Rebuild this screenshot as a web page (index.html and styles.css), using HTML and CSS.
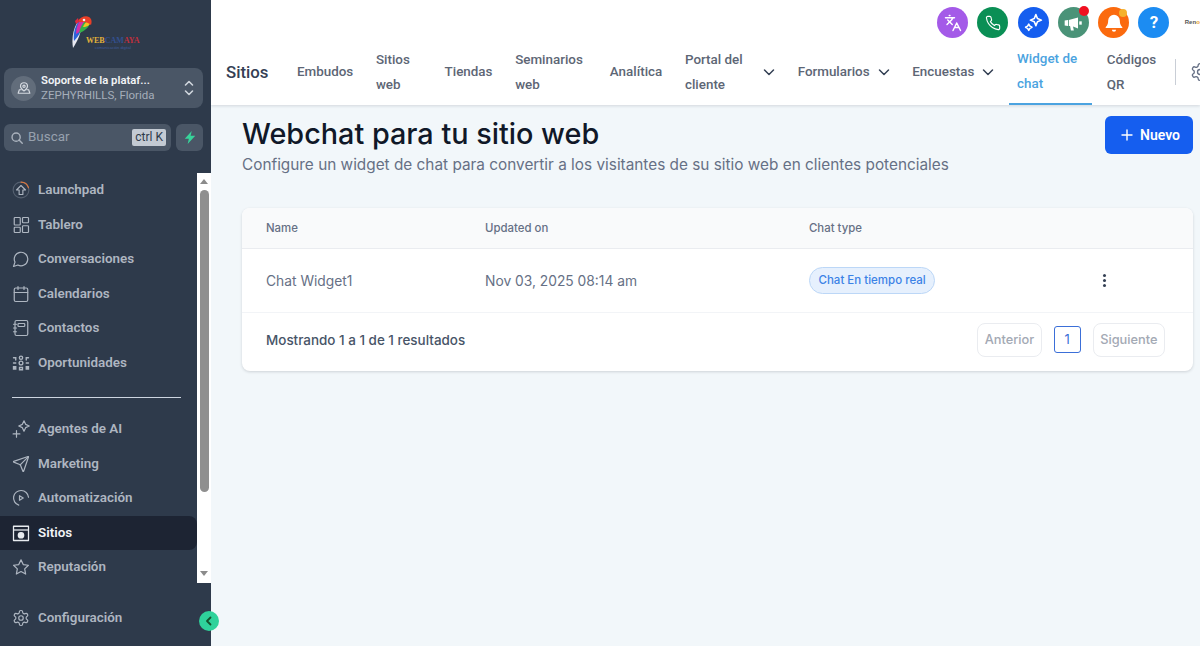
FILE: index.html
```html
<!DOCTYPE html>
<html lang="es">
<head>
<meta charset="utf-8">
<title>Webchat para tu sitio web</title>
<link rel="stylesheet" href="styles.css">
</head>
<body>
<div class="app">
  <aside class="sidebar">
    <div class="logo">
      <svg class="parrot" width="21" height="34" viewBox="0 0 21 34">
        <path d="M1 33C-.5 24 1 15 5 8c1-1 3 0 4 2 1 5-2 14-8 23z" fill="#e8eaf2"/>
        <path d="M2 26C1 19 3 12 6 7l4 2c0 6-3 12-8 17z" fill="#2d62d8"/>
        <path d="M4 19C4 13 6 8 9 4l4 3c0 5-3 9-9 12z" fill="#d42fa8"/>
        <path d="M7 18c1-5 3-9 6-12l5 2c-1 4-5 8-11 10z" fill="#35b04a"/>
        <path d="M11 12c1-3 3-5 5-6l3 1c-1 3-4 5-8 5z" fill="#f3c220"/>
        <path d="M6 6c2-4 8-6 11-4 3 2 3 5 2 8-2-2-5-3-8-3-2 0-4 0-5-1z" fill="#ea3f27"/>
        <path d="M6 3L3 6l1 3 3-2z" fill="#e0283f"/>
        <circle cx="12" cy="5" r="1.300" fill="#f2f4f7"/>
      </svg>
      <div class="logo-words">
        <div class="logo-name"><span class="ly">WEB</span><span class="lb">CAM</span><span class="lr">AYA</span></div>
        <div class="logo-sub">comunicación digital</div>
      </div>
    </div>

    <div class="account">
      <span class="account-avatar">
        <svg width="14" height="14" viewBox="0 0 24 24" fill="none" stroke="#d5dae1" stroke-width="2" stroke-linecap="round" stroke-linejoin="round"><path d="M18 9c0 4-6 8-6 8s-6-4-6-8a6 6 0 0 1 12 0z"/><circle cx="12" cy="9" r="2"/><path d="M7 15H4l-2 6h20l-2-6h-3"/></svg>
      </span>
      <div class="account-text">
        <div class="account-name">Soporte de la plataf...</div>
        <div class="account-place">ZEPHYRHILLS, Florida</div>
      </div>
      <svg class="account-toggle" width="12" height="20" viewBox="0 0 12 20" fill="none" stroke="#cfd5dc" stroke-width="1.600" stroke-linecap="round" stroke-linejoin="round"><path d="M2.500 7l3.500-3.500L9.500 7M2.500 13l3.500 3.500 3.500-3.500"/></svg>
    </div>

    <div class="search-row">
      <div class="search">
        <svg width="14" height="14" viewBox="0 0 24 24" fill="none" stroke="#aab2bd" stroke-width="2.400" stroke-linecap="round"><circle cx="10.500" cy="10.500" r="7"/><path d="M21 21l-5.500-5.500"/></svg>
        <span class="search-label">Buscar</span>
        <span class="kbd">ctrl K</span>
      </div>
      <button class="bolt" aria-label="Acciones rápidas">
        <svg width="14" height="15" viewBox="0 0 24 24"><path d="M15 1L3 14h7l-2 9 13-14h-8z" fill="#37d39a"/></svg>
      </button>
    </div>

    <div class="nav-wrap">
      <nav class="nav">
        <a class="nav-item"><svg class="ico" viewBox="0 0 24 24" fill="none" stroke-width="1.500" stroke-linecap="round" stroke-linejoin="round"><circle cx="12" cy="12" r="10.500" stroke="#556070"/><path d="M12 1.500a10.500 10.500 0 0 1 10 7.500" stroke="#d9773f"/><path d="M12 6l-6 6h3.500v6h5v-6H18z" stroke="#aeb6c1"/></svg><span>Launchpad</span></a>
        <a class="nav-item"><svg class="ico" viewBox="0 0 24 24" fill="none" stroke="#aeb6c1" stroke-width="1.600" stroke-linejoin="round"><rect x="3" y="2" width="8" height="10" rx="1"/><rect x="14" y="2" width="8" height="7" rx="1"/><rect x="14" y="13" width="8" height="9" rx="1"/><rect x="3" y="15" width="8" height="7" rx="1"/></svg><span>Tablero</span></a>
        <a class="nav-item"><svg class="ico" viewBox="0 0 24 24" fill="none" stroke="#aeb6c1" stroke-width="1.600" stroke-linecap="round" stroke-linejoin="round"><path d="M7.900 20A9 9 0 1 0 4 16.100L2 22Z"/></svg><span>Conversaciones</span></a>
        <a class="nav-item"><svg class="ico" viewBox="0 0 24 24" fill="none" stroke="#aeb6c1" stroke-width="1.600" stroke-linecap="round" stroke-linejoin="round"><rect x="3" y="4" width="18" height="18" rx="2"/><path d="M8 2v4M16 2v4M3 10h18"/></svg><span>Calendarios</span></a>
        <a class="nav-item"><svg class="ico" viewBox="0 0 24 24" fill="none" stroke="#aeb6c1" stroke-width="1.600" stroke-linecap="round" stroke-linejoin="round"><rect x="4" y="2" width="17" height="20" rx="2"/><rect x="8" y="6" width="9" height="4" rx="1"/><path d="M2 7h4M2 12h4M2 17h4"/></svg><span>Contactos</span></a>
        <a class="nav-item"><svg class="ico" viewBox="0 0 24 24" fill="none" stroke="#aeb6c1" stroke-width="1.800" stroke-linecap="round"><circle cx="12" cy="5" r="2.200"/><circle cx="12" cy="12" r="2.500"/><path d="M10 21v-3h4v3z"/><path d="M2 5h3v3M22 5h-3v3M2 12h3M19 12h3"/><path d="M2 17h3v3H2zM19 17h3v3h-3z" fill="#aeb6c1"/></svg><span>Oportunidades</span></a>

        <div class="nav-divider"></div>

        <a class="nav-item"><svg class="ico" viewBox="0 0 24 24" fill="none" stroke="#aeb6c1" stroke-width="1.600" stroke-linecap="round" stroke-linejoin="round"><path d="M16 1l2.200 4.800L23 8l-4.800 2.200L16 15l-2.200-4.800L9 8l4.800-2.200z"/><path d="M6 14v9M1.500 18.500h9"/></svg><span>Agentes de AI</span></a>
        <a class="nav-item"><svg class="ico" viewBox="0 0 24 24" fill="none" stroke="#aeb6c1" stroke-width="1.600" stroke-linecap="round" stroke-linejoin="round"><path d="M14.536 21.686a.5.5 0 0 0 .937-.024l6.500-19a.496.496 0 0 0-.635-.635l-19 6.500a.5.5 0 0 0-.024.937l7.930 3.180a2 2 0 0 1 1.112 1.110z"/><path d="m21.854 2.147-10.940 10.939"/></svg><span>Marketing</span></a>
        <a class="nav-item"><svg class="ico" viewBox="0 0 24 24" fill="none" stroke="#aeb6c1" stroke-width="1.600" stroke-linecap="round" stroke-linejoin="round"><path d="M22 11A10 10 0 1 0 9 21.500"/><path d="M10 9v6l5-3z"/></svg><span>Automatización</span></a>
        <a class="nav-item is-active"><svg class="ico" viewBox="0 0 24 24" fill="none" stroke="#e8ebef" stroke-width="1.700" stroke-linejoin="round"><rect x="2" y="3" width="20" height="19"/><path d="M2 8h20"/><circle cx="12" cy="15" r="3.600" fill="#e8ebef"/></svg><span>Sitios</span></a>
        <a class="nav-item"><svg class="ico" viewBox="0 0 24 24" fill="none" stroke="#aeb6c1" stroke-width="1.600" stroke-linejoin="round"><path d="M12 2.500l3 6.300 6.900.9-5 4.800 1.300 6.900-6.200-3.400-6.200 3.400 1.300-6.900-5-4.800 6.900-.9z"/></svg><span>Reputación</span></a>
      </nav>
      <div class="scrollbar">
        <span class="arrow-up"></span>
        <span class="thumb"></span>
        <span class="arrow-down"></span>
      </div>
    </div>

    <a class="nav-item settings"><svg class="ico" viewBox="0 0 24 24" fill="none" stroke="#aeb6c1" stroke-width="1.600" stroke-linecap="round" stroke-linejoin="round"><path d="M12.220 2h-.44a2 2 0 0 0-2 2v.18a2 2 0 0 1-1 1.730l-.43.25a2 2 0 0 1-2 0l-.15-.08a2 2 0 0 0-2.730.73l-.22.38a2 2 0 0 0 .73 2.730l.15.1a2 2 0 0 1 1 1.720v.51a2 2 0 0 1-1 1.740l-.15.09a2 2 0 0 0-.73 2.730l.22.38a2 2 0 0 0 2.730.73l.15-.08a2 2 0 0 1 2 0l.43.25a2 2 0 0 1 1 1.730V20a2 2 0 0 0 2 2h.44a2 2 0 0 0 2-2v-.18a2 2 0 0 1 1-1.730l.43-.25a2 2 0 0 1 2 0l.15.08a2 2 0 0 0 2.730-.73l.22-.39a2 2 0 0 0-.73-2.730l-.15-.08a2 2 0 0 1-1-1.740v-.5a2 2 0 0 1 1-1.740l.15-.09a2 2 0 0 0 .73-2.730l-.22-.38a2 2 0 0 0-2.730-.73l-.15.08a2 2 0 0 1-2 0l-.43-.25a2 2 0 0 1-1-1.730V4a2 2 0 0 0-2-2z"/><circle cx="12" cy="12" r="3"/></svg><span>Configuración</span></a>

    <button class="collapse" aria-label="Contraer">
      <svg width="10" height="10" viewBox="0 0 10 10" fill="none" stroke="#14532d" stroke-width="1.800" stroke-linecap="round" stroke-linejoin="round"><path d="M6.500 1.500L3 5l3.500 3.500"/></svg>
    </button>
  </aside>

  <main class="main">
    <header class="topbar">
      <div class="quick">
        <span class="qbtn q-purple"><svg width="18" height="18" viewBox="0 0 24 24" fill="none" stroke="#fff" stroke-width="1.900" stroke-linecap="round" stroke-linejoin="round"><path d="m5 8 6 6M4 14l6-6 2-3M2 5h12M7 2h1M22 22l-5-10-5 10M14 18h6"/></svg></span>
        <span class="qbtn q-green"><svg width="16" height="16" viewBox="0 0 24 24" fill="none" stroke="#fff" stroke-width="1.700" stroke-linecap="round" stroke-linejoin="round"><path d="M22 16.920v3a2 2 0 0 1-2.180 2 19.790 19.790 0 0 1-8.630-3.070 19.500 19.500 0 0 1-6-6 19.790 19.790 0 0 1-3.070-8.670A2 2 0 0 1 4.110 2h3a2 2 0 0 1 2 1.720 12.840 12.840 0 0 0 .7 2.810 2 2 0 0 1-.45 2.110L8.090 9.910a16 16 0 0 0 6 6l1.270-1.270a2 2 0 0 1 2.110-.45 12.840 12.840 0 0 0 2.810.7A2 2 0 0 1 22 16.920z"/></svg></span>
        <span class="qbtn q-blue"><svg width="19" height="19" viewBox="0 0 24 24" fill="none" stroke="#fff" stroke-width="2" stroke-linejoin="round"><path d="M15 2l2 5 5 2-5 2-2 5-2-5-5-2 5-2z"/><path d="M6 14l1.500 2.500L10 18l-2.500 1.500L6 22l-1.500-2.500L2 18l2.500-1.500z"/></svg></span>
        <span class="qbtn q-teal"><svg width="20" height="20" viewBox="0 0 24 24" fill="#fff"><path d="M2 9v6l4 .5V8.500z"/><path d="M7 8.500v7l1.500.2 1 5.300h3.500l-1-4.800 6 2.300V5.500z"/><rect x="19.500" y="10" width="3" height="4"/></svg><i class="dot dot-red"></i></span>
        <span class="qbtn q-orange"><svg width="20" height="20" viewBox="0 0 24 24" fill="#fff"><path d="M12 2a7 7 0 0 0-7 7c0 5-2 7-3 8v1h20v-1c-1-1-3-3-3-8a7 7 0 0 0-7-7z"/><path d="M9.500 20a2.500 2.500 0 0 0 5 0z"/></svg><i class="dot dot-amber"></i></span>
        <span class="qbtn q-sky">?</span>
        <span class="brand-mini"><b>Ren</b><i>o</i></span>
      </div>
      <div class="tabs-row">
        <div class="section-title">Sitios</div>
        <div class="tab">Embudos</div>
        <div class="tab w-sitios">Sitios web</div>
        <div class="tab">Tiendas</div>
        <div class="tab w-seminarios">Seminarios web</div>
        <div class="tab">Analítica</div>
        <div class="tab has-chev"><span class="w-portal">Portal del cliente</span><svg class="chev" width="12" height="12" viewBox="0 0 12 12" fill="none" stroke="#344054" stroke-width="1.500" stroke-linecap="round" stroke-linejoin="round"><path d="M1.500 4l4.500 4.500L10.500 4"/></svg></div>
        <div class="tab has-chev">Formularios<svg class="chev" width="12" height="12" viewBox="0 0 12 12" fill="none" stroke="#344054" stroke-width="1.500" stroke-linecap="round" stroke-linejoin="round"><path d="M1.500 4l4.500 4.500L10.500 4"/></svg></div>
        <div class="tab has-chev">Encuestas<svg class="chev" width="12" height="12" viewBox="0 0 12 12" fill="none" stroke="#344054" stroke-width="1.500" stroke-linecap="round" stroke-linejoin="round"><path d="M1.500 4l4.500 4.500L10.500 4"/></svg></div>
        <div class="tab is-current w-widget">Widget de chat</div>
        <div class="tab w-codigos">Códigos QR</div>
        <span class="tabs-sep"></span>
        <svg class="tabs-gear" width="20" height="20" viewBox="0 0 24 24" fill="none" stroke="#667085" stroke-width="1.600" stroke-linecap="round" stroke-linejoin="round"><path d="M12.220 2h-.44a2 2 0 0 0-2 2v.18a2 2 0 0 1-1 1.730l-.43.25a2 2 0 0 1-2 0l-.15-.08a2 2 0 0 0-2.730.73l-.22.38a2 2 0 0 0 .73 2.730l.15.1a2 2 0 0 1 1 1.720v.51a2 2 0 0 1-1 1.740l-.15.09a2 2 0 0 0-.73 2.730l.22.38a2 2 0 0 0 2.730.73l.15-.08a2 2 0 0 1 2 0l.43.25a2 2 0 0 1 1 1.730V20a2 2 0 0 0 2 2h.44a2 2 0 0 0 2-2v-.18a2 2 0 0 1 1-1.730l.43-.25a2 2 0 0 1 2 0l.15.08a2 2 0 0 0 2.730-.73l.22-.39a2 2 0 0 0-.73-2.730l-.15-.08a2 2 0 0 1-1-1.740v-.5a2 2 0 0 1 1-1.740l.15-.09a2 2 0 0 0 .73-2.730l-.22-.38a2 2 0 0 0-2.730-.73l-.15.08a2 2 0 0 1-2 0l-.43-.25a2 2 0 0 1-1-1.730V4a2 2 0 0 0-2-2z"/><circle cx="12" cy="12" r="3"/></svg>
      </div>
    </header>

    <section class="content">
      <div class="page-head">
        <div>
          <h1 class="page-title">Webchat para tu sitio web</h1>
          <p class="page-sub">Configure un widget de chat para convertir a los visitantes de su sitio web en clientes potenciales</p>
        </div>
        <button class="btn-new"><svg width="12" height="12" viewBox="0 0 12 12" fill="none" stroke="#fff" stroke-width="1.400" stroke-linecap="round"><path d="M6 1v10M1 6h10"/></svg>Nuevo</button>
      </div>

      <div class="card">
        <div class="grid-row head-row">
          <div>Name</div><div>Updated on</div><div>Chat type</div><div></div>
        </div>
        <div class="grid-row body-row">
          <div>Chat Widget1</div>
          <div>Nov 03, 2025 08:14 am</div>
          <div><span class="pill">Chat En tiempo real</span></div>
          <div class="more"><i></i><i></i><i></i></div>
        </div>
        <div class="card-foot">
          <div class="foot-text">Mostrando 1 a 1 de 1 resultados</div>
          <div class="pager">
            <span class="pg-btn">Anterior</span>
            <span class="pg-num">1</span>
            <span class="pg-btn">Siguiente</span>
          </div>
        </div>
      </div>
    </section>
  </main>
</div>
</body>
</html>
```
FILE: styles.css
```css
* { box-sizing: border-box; }
html, body { margin: 0; height: 100%; overflow: hidden; }
body { font-family: Inter, "Liberation Sans", sans-serif; color: #101828; background: #f2f7fa; }
.app { display: flex; width: 1200px; height: 646px; }

/* Sidebar */
.sidebar { position: relative; flex: 0 0 211px; height: 646px; background: #2e3a4b; display: flex; flex-direction: column; font-family: Roboto, "Liberation Sans", sans-serif; }
.logo { height: 68px; padding: 15px 0 0 72px; display: flex; align-items: flex-start; }
.parrot { flex: none; }
.logo-words { margin: 21px 0 0 -7px; }
.logo-name { font: 700 8px/9px "Liberation Serif", serif; white-space: nowrap; }
.ly { color: #e3b23a; }
.lb { color: #33508f; }
.lr { color: #bf2f3d; }
.logo-sub { font: 400 4px/5px "Liberation Sans", sans-serif; color: #3f5a9a; text-align: center; white-space: nowrap; }

.account { margin: 0 8px 0 4px; height: 40px; border-radius: 8px; background: #4a5666; display: flex; align-items: center; padding: 0 8px 0 7px; }
.account-avatar { width: 25px; height: 25px; border-radius: 50%; background: #626d7b; display: flex; align-items: center; justify-content: center; flex: none; }
.account-text { flex: 1; margin-left: 5px; min-width: 0; }
.account-name { font-size: 11.300px; line-height: 14px; font-weight: 600; color: #f2f4f7; white-space: nowrap; }
.account-place { font-size: 11.500px; line-height: 14px; color: #a5aeba; white-space: nowrap; }
.account-toggle { flex: none; }

.search-row { margin: 16px 8px 0 4px; display: flex; gap: 5px; height: 27px; }
.search { flex: 1; background: #4a5666; border-radius: 6px; display: flex; align-items: center; padding: 0 5px 0 6px; }
.search-label { margin-left: 4px; padding-bottom: 2px; font-size: 13.400px; color: #97a1ae; flex: 1; }
.kbd { background: #c3cad3; color: #2e3a4b; font-size: 12px; line-height: 17px; padding: 0 3px; border-radius: 2px; }
.bolt { width: 27px; height: 27px; border: 0; padding: 0; border-radius: 6px; background: #4a5666; display: flex; align-items: center; justify-content: center; }

.nav-wrap { margin-top: 22px; height: 410px; display: flex; }
.nav { flex: 0 0 197px; display: flex; flex-direction: column; }
.nav-item { display: flex; align-items: center; height: 34.500px; padding-left: 12px; color: #aeb6c1; font-size: 13.400px; font-weight: 600; flex: none; }
.nav-item span { padding-bottom: 1px; }
.ico { width: 18px; height: 18px; flex: none; margin-right: 8px; }
.is-active { background: #1d2433; color: #f2f4f7; border-radius: 0 8px 8px 0; }
.nav-divider { margin: 16.500px 16px 14.500px 12px; border-top: 1px solid #cdd5e0; flex: none; }
.settings { margin-top: 18px; }

.scrollbar { flex: 0 0 14px; background: #fff; display: flex; flex-direction: column; align-items: center; padding-top: 6px; }
.arrow-up { width: 0; height: 0; border: 4px solid transparent; border-top: 0; border-bottom: 5px solid #8b8b8b; }
.thumb { width: 9px; height: 302px; margin-top: 6px; background: #8f8f8f; border-radius: 5px; }
.arrow-down { width: 0; height: 0; margin-top: 79px; border: 4px solid transparent; border-bottom: 0; border-top: 5px solid #8b8b8b; }

.collapse { position: absolute; left: 199px; top: 611px; width: 20px; height: 20px; border: 0; padding: 0; border-radius: 50%; background: #2fd29b; display: flex; align-items: center; justify-content: center; z-index: 2; }

/* Main */
.main { flex: 1; min-width: 0; overflow: hidden; display: flex; flex-direction: column; }
.topbar { height: 105px; flex: none; background: #fff; box-shadow: 0 1px 3px rgba(16,24,40,.14); position: relative; z-index: 1; font-family: Roboto, "Liberation Sans", sans-serif; }
.quick { height: 47px; padding: 7px 0 0 726px; display: flex; gap: 9.300px; align-items: flex-start; white-space: nowrap; }
.qbtn { position: relative; flex: none; width: 31px; height: 31px; border-radius: 50%; display: flex; align-items: center; justify-content: center; color: #fff; font: 700 17px/1 Roboto, sans-serif; }
.q-purple { background: #a45ae8; }
.q-green { background: #0a8f55; }
.q-blue { background: #155eef; }
.q-teal { background: #4a9378; }
.q-orange { background: #fb6a0e; }
.q-sky { background: #1c8cf2; }
.dot { position: absolute; width: 10px; height: 10px; border-radius: 50%; top: -1px; right: 0; }
.dot-red { background: #f01020; }
.dot-amber { background: #f5b22b; width: 8px; height: 8px; top: 2px; right: 2px; }
.brand-mini { font: 700 6px/31px "Liberation Sans", sans-serif; color: #555; margin-left: 6px; }
.brand-mini i { color: #e79a1e; font-style: normal; font-weight: 700; }

.tabs-row { height: 58px; display: flex; align-items: center; gap: 6.700px; padding-left: 15px; white-space: nowrap; }
.section-title { font-size: 16.800px; font-weight: 500; color: #344054; width: 56.300px; flex: none; margin-bottom: 9px; }
.tab { flex: none; padding: 0 8px 9px; font-size: 13.400px; line-height: 25px; color: #5d6675; font-weight: 500; display: flex; align-items: center; height: 58px; }
.w-sitios { width: 62px; white-space: normal; }
.w-seminarios { width: 88px; white-space: normal; }
.w-portal { width: 72px; white-space: normal; flex: none; }
.w-widget { width: 83px; white-space: normal; }
.w-codigos { width: 66px; white-space: normal; }
.chev { margin-left: 8px; flex: none; }
.has-chev .w-portal + .chev { margin-left: 6px; }
.is-current { color: #4ba3e0; box-shadow: inset 0 -2px 0 #4ba3e0; padding-bottom: 11px; }
.tabs-sep { flex: none; width: 1px; height: 26px; margin: 0 0 8px 4px; background: #c9ced6; }
.tabs-gear { flex: none; margin: 0 0 8px 7px; }

.content { flex: 1; padding: 11px 7px 0 31px; background: #f2f7fa; }
.page-head { display: flex; justify-content: space-between; align-items: flex-start; height: 92px; }
.page-title { margin: 0; font-size: 28.800px; line-height: 36px; font-weight: 500; color: #101828; white-space: nowrap; }
.page-sub { margin: 2px 0 0; font-size: 15.350px; line-height: 22px; color: #667085; white-space: nowrap; }
.btn-new { width: 88px; height: 38px; border: 0; border-radius: 6px; background: #155eef; color: #fff; font: 600 14px/1 Roboto, sans-serif; display: flex; align-items: center; justify-content: center; gap: 7px; padding: 0 0 0 3px; }

.card { background: #fff; border-radius: 8px; box-shadow: 0 1px 3px rgba(16,24,40,.16); overflow: hidden; }
.grid-row { display: grid; grid-template-columns: 219px 324px 295px 1fr; padding-left: 24px; align-items: center; }
.head-row { height: 41px; padding-bottom: 1px; background: #f9fafb; font-size: 11.400px; font-weight: 500; color: #667085; border-bottom: 1px solid #eaecf0; }
.body-row { height: 64px; font-size: 13.800px; color: #667085; border-bottom: 1px solid #f2f4f7; }
.pill { display: inline-block; height: 27px; line-height: 25px; padding: 0 8.500px; font-size: 11.500px; font-weight: 500; color: #3b82e6; background: #e6f0fd; border: 1px solid #bcd7f7; border-radius: 14px; }
.more { display: flex; flex-direction: column; align-items: flex-start; gap: 2px; margin-left: -1px; }
.more i { width: 3px; height: 3px; border-radius: 50%; background: #344054; }
.card-foot { height: 58px; padding: 0 28px 5px 24px; display: flex; justify-content: space-between; align-items: center; }
.foot-text { font-size: 13.450px; font-weight: 500; color: #475467; }
.pager { display: flex; align-items: center; gap: 12px; }
.pg-btn { height: 34px; padding: 0 6.500px; line-height: 32px; font-size: 12.800px; font-weight: 500; color: #a3a9b4; border: 1px solid #eaecf0; border-radius: 8px; }
.pg-num { width: 27px; height: 27px; line-height: 25px; text-align: center; font-size: 13px; color: #3b6fd8; border: 1px solid #3b6fd8; border-radius: 3px; }
```
